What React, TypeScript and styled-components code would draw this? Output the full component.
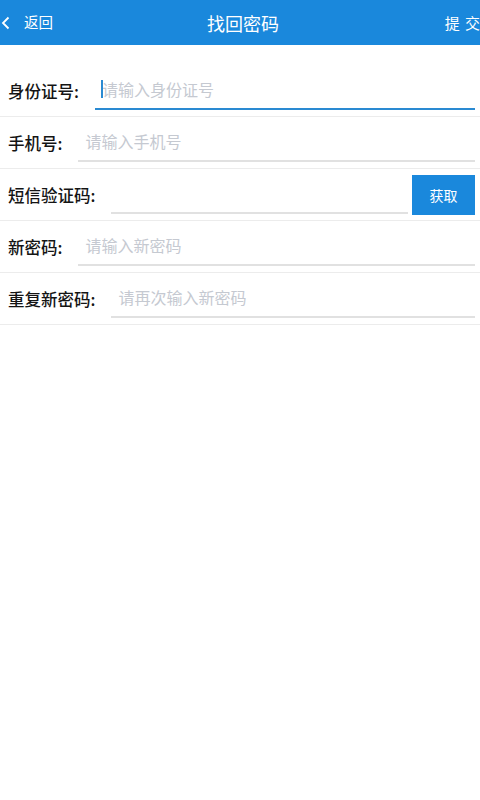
import styled, { createGlobalStyle } from 'styled-components';

const GlobalStyle = createGlobalStyle`
  html, body {
    margin: 0;
    padding: 0;
    background: #ffffff;
    font-family: 'Noto Sans CJK SC', 'Noto Sans', sans-serif;
  }
  * { box-sizing: border-box; }
`;

interface FieldProps {
  label: string;
  placeholder?: string;
  focused?: boolean;
  withButton?: boolean;
}

function Field(props: FieldProps) {
  const { label, placeholder, focused, withButton } = props;
  return (
    <Styled.Row>
      <Styled.Label>{label}</Styled.Label>
      <Styled.InputWrap focused={!!focused}>
        {focused && <Styled.Caret />}
        <Styled.Input placeholder={placeholder} />
      </Styled.InputWrap>
      {withButton && <Styled.GetButton>获取</Styled.GetButton>}
    </Styled.Row>
  );
}

function App() {
  return (
    <Styled.Root>
      <GlobalStyle />
      <Styled.Header>
        <Styled.Back>
          <svg width="9" height="14" viewBox="0 0 9 14">
            <path d="M7.5 1.5 L2 7 L7.5 12.5" stroke="#ffffff" strokeWidth="1.8" fill="none" />
          </svg>
          <span>返回</span>
        </Styled.Back>
        <Styled.Title>找回密码</Styled.Title>
        <Styled.Submit>提 交</Styled.Submit>
      </Styled.Header>
      <Styled.Form>
        <Field label="身份证号:" placeholder="请输入身份证号" focused />
        <Field label="手机号:" placeholder="请输入手机号" />
        <Field label="短信验证码:" withButton />
        <Field label="新密码:" placeholder="请输入新密码" />
        <Field label="重复新密码:" placeholder="请再次输入新密码" />
      </Styled.Form>
    </Styled.Root>
  );
}

export default App;

const Styled = {
  Root: styled.div`
    width: 480px;
    min-height: 800px;
    background: #ffffff;
  `,
  Header: styled.div`
    display: grid;
    grid-template-columns: 1fr auto 1fr;
    align-items: center;
    height: 45px;
    background: #1a88dc;
    color: #ffffff;
    overflow: hidden;
  `,
  Back: styled.div`
    display: flex;
    align-items: center;
    gap: 14px;
    padding-left: 1px;
    font-size: 14.5px;
    & > span {
      line-height: 1;
    }
  `,
  Title: styled.div`
    font-size: 18px;
    padding-left: 6px;
    line-height: 1;
  `,
  Submit: styled.div`
    justify-self: end;
    font-size: 15px;
    line-height: 1;
    letter-spacing: 1px;
    white-space: pre;
    margin-right: -1px;
  `,
  Form: styled.div`
    display: flex;
    flex-direction: column;
    padding-top: 20px;
  `,
  Row: styled.div`
    display: flex;
    align-items: center;
    height: 52px;
    padding: 0 5px 0 8px;
    border-bottom: 1px solid #ececec;
  `,
  Label: styled.div`
    font-size: 16.5px;
    font-weight: 500;
    color: #141414;
    white-space: nowrap;
    margin-right: 16px;
  `,
  InputWrap: styled.div<{ focused: boolean }>`
    position: relative;
    flex: 1;
    display: flex;
    align-items: center;
    height: 34px;
    margin-top: 5px;
    border-bottom: 2px solid ${({ focused }) => (focused ? '#2a8ad2' : '#e1e1e1')};
  `,
  Caret: styled.span`
    position: absolute;
    left: 6px;
    top: 4px;
    width: 2px;
    height: 18px;
    background: #2a8ad2;
  `,
  Input: styled.input`
    flex: 1;
    width: 100%;
    border: none;
    outline: none;
    background: transparent;
    padding: 0 0 6px 7px;
    font-family: 'Noto Sans CJK SC', 'Noto Sans', sans-serif;
    font-size: 16px;
    color: #333;
    &::placeholder {
      color: #c5c9d1;
    }
  `,
  GetButton: styled.button`
    width: 63px;
    height: 40px;
    margin-left: 4px;
    border: none;
    background: #1a88dc;
    color: #ffffff;
    font-family: 'Noto Sans CJK SC', 'Noto Sans', sans-serif;
    font-size: 14px;
    padding: 0;
  `,
};
